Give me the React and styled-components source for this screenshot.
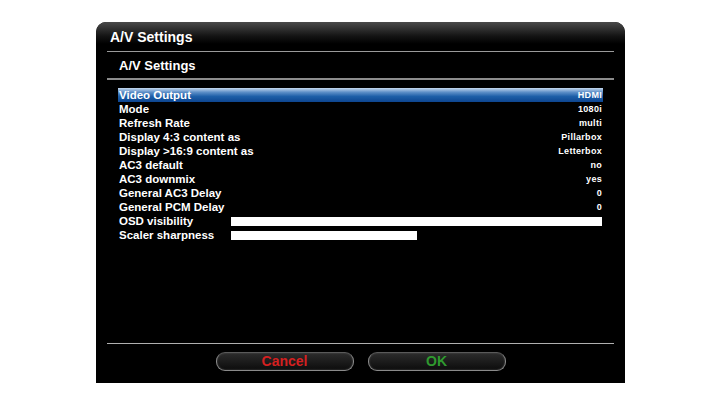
import React from "react";
import styled, { createGlobalStyle } from "styled-components";

// STYLES

const Global = createGlobalStyle`
  html, body {
    margin: 0;
    padding: 0;
    background: #ffffff;
  }
`;

const Page = styled.div`
  width: 720px;
  height: 405px;
  padding: 22px 0 0 96px;
  box-sizing: border-box;
`;

const Panel = styled.div`
  width: 529px;
  height: 361px;
  background: #000000;
  border-radius: 10px 10px 0 0;
  display: flex;
  flex-direction: column;
  font-family: "Liberation Sans", Arial, sans-serif;
  color: #ffffff;
  overflow: hidden;
`;

const Header = styled.div`
  height: 29px;
  padding: 0 14px;
  display: flex;
  align-items: center;
  font-size: 14px;
  font-weight: bold;
  background: linear-gradient(to bottom, #4a4a4a 0px, #141414 14px, #000000 22px);
`;

const Rule = styled.div`
  margin: 0 11px;
  height: ${(p) => p.thick || 1}px;
  background: ${(p) => p.color || "#9a9a9a"};
`;

const SubHeader = styled.div`
  height: 26px;
  padding: 0 23px;
  display: flex;
  align-items: center;
  font-size: 13px;
  font-weight: bold;
`;

const List = styled.ul`
  list-style: none;
  margin: 0;
  padding: 8px 22px 0 22px;
  flex: 1;
`;

const Row = styled.li`
  height: 14px;
  display: flex;
  align-items: center;
  padding: 0 1px;
  background: ${(p) =>
    p.selected
      ? "linear-gradient(to bottom, #c6d8ee 0%, #5d8fc8 30%, #1e5fa8 60%, #0d4590 100%)"
      : "transparent"};
`;

const Label = styled.span`
  font-size: 11.5px;
  font-weight: bold;
  width: 112px;
  white-space: nowrap;
`;

const Value = styled.span`
  margin-left: auto;
  font-size: 9px;
  font-weight: bold;
  letter-spacing: 0.3px;
`;

const Track = styled.div`
  flex: 1;
  height: 9px;
  display: flex;
`;

const Fill = styled.div`
  height: 100%;
  background: #ffffff;
`;

const Footer = styled.div`
  height: 39px;
  display: flex;
  justify-content: center;
  align-items: flex-start;
  gap: 14px;
  padding-top: 8px;
  box-sizing: border-box;
`;

const Button = styled.button`
  width: 138px;
  height: 19px;
  border-radius: 9px;
  border: 1px solid #8a8a8a;
  border-top-color: #5a5a5a;
  background: linear-gradient(to bottom, #2c2c2c, #0c0c0c);
  box-shadow: inset 0 0 2px #555;
  font-family: "Liberation Sans", Arial, sans-serif;
  font-size: 14px;
  font-weight: bold;
  line-height: 17px;
  color: ${(p) => p.color};
  padding: 0;
`;

// DATA

const settings = [
  { label: "Video Output", value: "HDMI", selected: true },
  { label: "Mode", value: "1080i" },
  { label: "Refresh Rate", value: "multi" },
  { label: "Display 4:3 content as", value: "Pillarbox" },
  { label: "Display >16:9 content as", value: "Letterbox" },
  { label: "AC3 default", value: "no" },
  { label: "AC3 downmix", value: "yes" },
  { label: "General AC3 Delay", value: "0" },
  { label: "General PCM Delay", value: "0" },
  { label: "OSD visibility", bar: 100 },
  { label: "Scaler sharpness", bar: 50 }
];

// COMPONENT

export default function App() {
  return (
    <Page>
      <Global />
      <Panel>
        <Header>A/V Settings</Header>
        <Rule />
        <SubHeader>A/V Settings</SubHeader>
        <Rule thick={2} color="#8c8c8c" />
        <List>
          {settings.map((s) => (
            <Row key={s.label} selected={s.selected}>
              <Label>{s.label}</Label>
              {s.bar !== undefined ? (
                <Track>
                  <Fill style={{ width: `${s.bar}%` }} />
                </Track>
              ) : (
                <Value>{s.value}</Value>
              )}
            </Row>
          ))}
        </List>
        <Rule color="#b0b0b0" />
        <Footer>
          <Button color="#d42020">Cancel</Button>
          <Button color="#2f9a2f">OK</Button>
        </Footer>
      </Panel>
    </Page>
  );
}
